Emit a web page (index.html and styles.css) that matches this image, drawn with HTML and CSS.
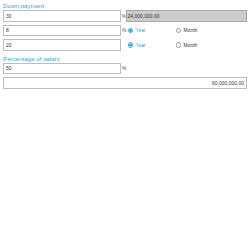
FILE: index.html
```html
<!DOCTYPE html>
<html>
<head>
<meta charset="utf-8">
<link rel="stylesheet" href="styles.css">
</head>
<body>
<div class="form">
  <div class="label">Down payment</div>
  <div class="row">
    <div class="field"><span class="val">30</span></div>
    <span class="unit">%</span>
    <div class="result"><span class="val">24,000,000.00</span></div>
  </div>
  <div class="row">
    <div class="field"><span class="val">8</span></div>
    <span class="unit">%</span>
    <div class="radios">
      <div class="radio on"><span class="dot"></span><span class="rlabel">Year</span></div>
      <div class="radio"><span class="dot"></span><span class="rlabel">Month</span></div>
    </div>
  </div>
  <div class="row">
    <div class="field"><span class="val">20</span></div>
    <span class="unit"></span>
    <div class="radios">
      <div class="radio on"><span class="dot"></span><span class="rlabel">Year</span></div>
      <div class="radio"><span class="dot"></span><span class="rlabel">Month</span></div>
    </div>
  </div>
  <div class="label second">Percentage of salary</div>
  <div class="row">
    <div class="field"><span class="val">50</span></div>
    <span class="unit">%</span>
  </div>
  <div class="row">
    <div class="field wide"><span class="val">60,000,000.00</span></div>
  </div>
</div>
</body>
</html>
```
FILE: styles.css
```css
html, body {
  margin: 0;
  padding: 0;
  background: #ffffff;
}
body {
  font-family: "Liberation Sans", Arial, sans-serif;
  color: #333333;
}
.form {
  display: flex;
  flex-direction: column;
  padding: 2px 3px 0 3px;
}
.label {
  font-size: 6.2px;
  color: #33a9e0;
  height: 8px;
  line-height: 8px;
}
.label.second {
  margin-top: 1px;
}
.row {
  display: flex;
  align-items: center;
  height: 11.5px;
  margin-bottom: 3px;
}
.field {
  box-sizing: border-box;
  width: 118px;
  height: 11.5px;
  border: 1px solid #bdbdbd;
  background: #ffffff;
  display: flex;
  align-items: center;
  padding-left: 2px;
  font-size: 5px;
  color: #333333;
}
.field.wide {
  width: 244px;
  justify-content: flex-end;
  padding-right: 2px;
}
.unit {
  width: 4px;
  font-size: 5px;
  color: #555555;
  padding-left: 1px;
}
.result {
  box-sizing: border-box;
  width: 122px;
  height: 11.5px;
  border: 1px solid #a8a8a8;
  background: #cccccc;
  display: flex;
  align-items: center;
  padding-left: 1px;
  font-size: 5px;
  color: #333333;
}
.radios {
  display: flex;
  align-items: center;
  padding-left: 1.5px;
}
.radio {
  display: flex;
  align-items: center;
  width: 48px;
  font-size: 5px;
  color: #333333;
}
.dot {
  box-sizing: border-box;
  width: 5.5px;
  height: 5.5px;
  border-radius: 50%;
  border: 0.6px solid #9a9a9a;
  background: #ffffff;
  margin-right: 2.5px;
}
.radio.on .dot {
  border-color: #33a9e0;
  background: radial-gradient(circle, #33a9e0 0 55%, #ffffff 62%);
}
.radio.on .rlabel {
  color: #33a9e0;
}
```
